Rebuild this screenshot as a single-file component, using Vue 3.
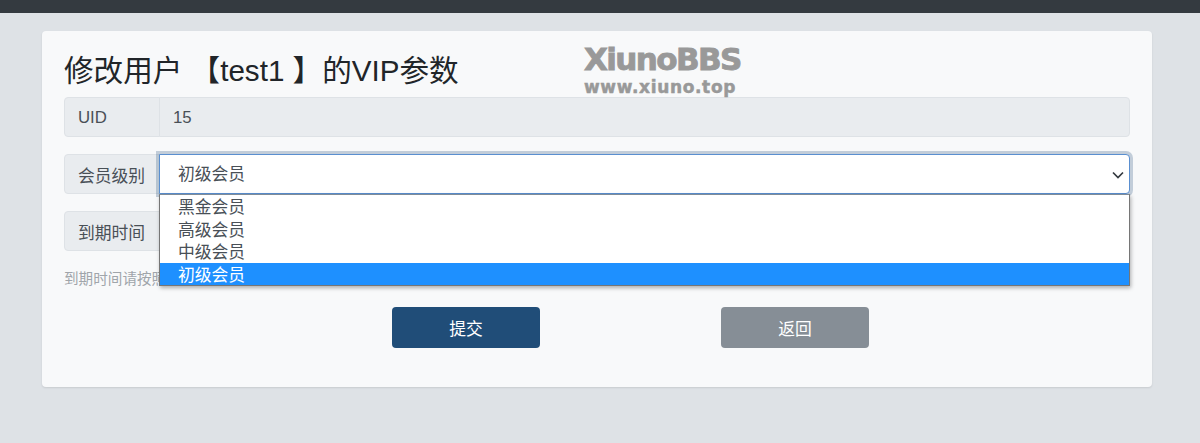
<template>
  <div class="page">
    <div class="topbar"></div>
    <div class="card">
      <!-- watermark -->
      <div class="watermark">
        <div class="wm-name">XiunoBBS</div>
        <div class="wm-url">www.xiuno.top</div>
      </div>

      <h1 class="title">修改用户 【test1 】的VIP参数</h1>

      <div class="group first">
        <span class="addon">UID</span>
        <input class="control readonly" type="text" value="15" readonly />
      </div>

      <div class="group">
        <span class="addon">会员级别</span>
        <div class="select-wrap">
          <select class="control select">
            <option v-for="level in levels" :key="level" :selected="level === current">{{ level }}</option>
          </select>
          <svg class="chevron" width="12" height="8" viewBox="0 0 12 8">
            <path d="M1 1.5 L6 6.5 L11 1.5" fill="none" stroke="#343a40" stroke-width="1.7" />
          </svg>
          <ul class="menu">
            <li v-for="level in levels" :key="level" :class="{ active: level === current }">{{ level }}</li>
          </ul>
        </div>
      </div>

      <div class="group">
        <span class="addon">到期时间</span>
        <input class="control" type="text" />
      </div>

      <p class="hint">到期时间请按照格式填写</p>

      <div class="actions">
        <button class="btn primary">提交</button>
        <button class="btn secondary">返回</button>
      </div>
    </div>
  </div>
</template>

<script setup>
const levels = ['黑金会员', '高级会员', '中级会员', '初级会员']
const current = '初级会员'
</script>

<style>
html,
body {
  margin: 0;
  background: #dee2e6;
}
</style>

<style scoped>
.page {
  height: 443px;
  overflow: hidden;
  background: #dee2e6;
  font-family: "Liberation Sans", "Noto Sans CJK SC", sans-serif;
  color: #212529;
}

.topbar {
  height: 13px;
  background: #343a40;
}

.card {
  position: relative;
  box-sizing: border-box;
  width: 1110px;
  height: 356px;
  margin: 18px 0 0 42px;
  padding: 17px 22px 0;
  background: #f8f9fa;
  border-radius: 4px;
  box-shadow: 0 1px 2px rgba(0, 0, 0, 0.1);
}

.watermark {
  position: absolute;
  left: 542px;
  top: 11px;
  font-family: "DejaVu Sans", sans-serif;
  font-weight: 700;
  color: #999;
  white-space: nowrap;
}

.wm-name {
  font-size: 31px;
  line-height: 34px;
  letter-spacing: -1.6px;
  -webkit-text-stroke: 0.9px #999;
}

.wm-url {
  font-size: 17px;
  line-height: 20px;
  margin-top: 1px;
  letter-spacing: 0.65px;
  -webkit-text-stroke: 0.5px #999;
}

.title {
  margin: 0;
  height: 49px;
  font-size: 29.6px;
  font-weight: 400;
  line-height: 46px;
}

.group {
  display: flex;
  height: 40px;
  margin-top: 17px;
}

.group.first {
  margin-top: 0;
}

.addon {
  box-sizing: border-box;
  width: 96px;
  flex: none;
  padding: 1px 13px 0;
  display: flex;
  align-items: center;
  font-size: 16.8px;
  color: #495057;
  background: #e9ecef;
  border: 1px solid #dee2e6;
  border-radius: 4px 0 0 4px;
  white-space: nowrap;
}

.control {
  box-sizing: border-box;
  flex: 1;
  min-width: 0;
  height: 40px;
  margin-left: -1px;
  padding: 1px 13px 0;
  font: inherit;
  font-size: 16.8px;
  color: #495057;
  background: #fff;
  border: 1px solid #ced4da;
  border-radius: 0 4px 4px 0;
  outline: none;
}

.readonly {
  background: #e9ecef;
  border-color: #dee2e6;
}

.select-wrap {
  position: relative;
  flex: 1;
  display: flex;
  margin-left: -1px;
}

.select {
  margin-left: 0;
  padding: 0 18px;
  appearance: none;
  opacity: 1;
  border-color: #5a8fd0;
  box-shadow: 0 0 0 3px rgba(32, 77, 120, 0.25);
}

.chevron {
  position: absolute;
  right: 6px;
  top: 17px;
}

.menu {
  position: absolute;
  left: 0;
  right: 0;
  top: 40px;
  margin: 0;
  padding: 0;
  list-style: none;
  background: #fff;
  border: 1px solid #767676;
  border-top-color: #7f8c99;
  box-shadow: 1px 2px 4px rgba(0, 0, 0, 0.3);
  font-size: 16.8px;
  color: #495057;
}

.menu li {
  height: 22.5px;
  line-height: 25px;
  padding-left: 18px;
}

.menu li.active {
  background: #1e90ff;
  color: #fff;
}

.hint {
  margin: 19px 0 0;
  height: 18px;
  font-size: 14.6px;
  line-height: 18px;
  color: #a0a5aa;
}

.actions {
  display: flex;
  gap: 181px;
  padding-left: 328px;
  margin-top: 19px;
}

.btn {
  width: 148px;
  height: 41px;
  padding: 0;
  font: inherit;
  font-size: 16.8px;
  color: #fff;
  border: 1px solid transparent;
  border-radius: 4px;
}

.primary {
  background: #204d78;
}

.secondary {
  background: #868e96;
}
</style>
